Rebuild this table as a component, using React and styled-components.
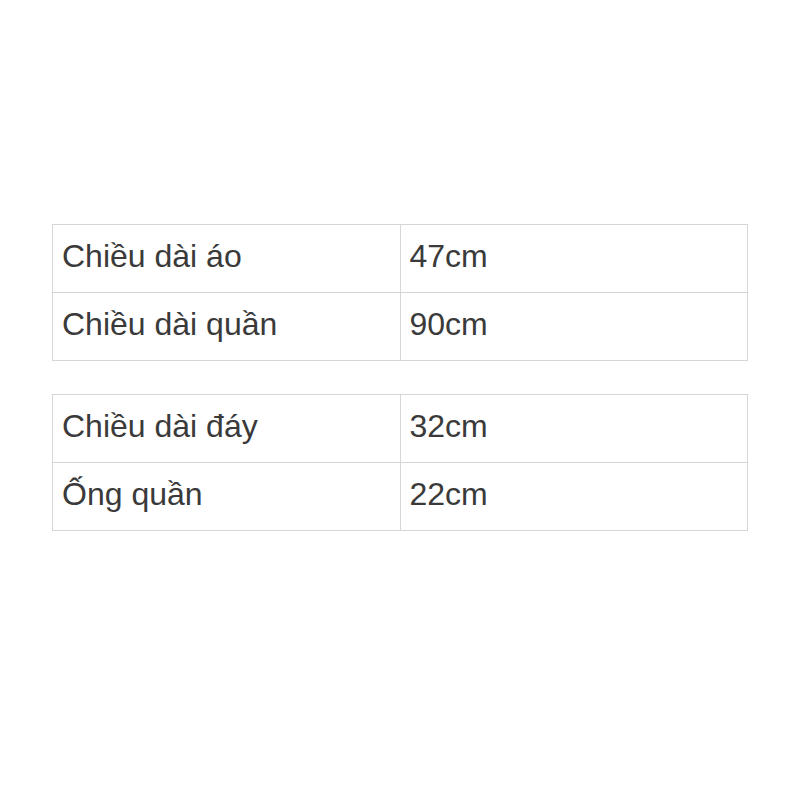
import React from "react";
import styled, { createGlobalStyle } from "styled-components";

const GlobalStyle = createGlobalStyle`
  html, body {
    margin: 0;
    padding: 0;
    background: #ffffff;
  }
  body {
    font-family: "Liberation Sans", Arial, sans-serif;
  }
`;

const Page = styled.div`
  width: 800px;
  height: 800px;
  box-sizing: border-box;
  padding: 224px 52px 0 52px;
  display: flex;
  flex-direction: column;
  gap: 33px;
`;

const Table = styled.div`
  display: grid;
  grid-template-columns: 1fr 1fr;
  border-top: 1px solid #d6d6d6;
  border-left: 1px solid #d6d6d6;
  width: 696px;
  box-sizing: border-box;
`;

const Cell = styled.div`
  height: 68px;
  box-sizing: border-box;
  display: flex;
  align-items: center;
  padding: 0 0 4px 9px;
  border-right: 1px solid #d6d6d6;
  border-bottom: 1px solid #d6d6d6;
  font-size: 32px;
  color: #3a3a3a;
  white-space: nowrap;
`;

const tables = [
  [
    ["Chiều dài áo", "47cm"],
    ["Chiều dài quần", "90cm"],
  ],
  [
    ["Chiều dài đáy", "32cm"],
    ["Ống quần", "22cm"],
  ],
];

export default function App() {
  return (
    <>
      <GlobalStyle />
      <Page>
        {tables.map((rows, i) => (
          <Table key={i}>
            {rows.map(([label, value]) => (
              <React.Fragment key={label}>
                <Cell>{label}</Cell>
                <Cell>{value}</Cell>
              </React.Fragment>
            ))}
          </Table>
        ))}
      </Page>
    </>
  );
}
